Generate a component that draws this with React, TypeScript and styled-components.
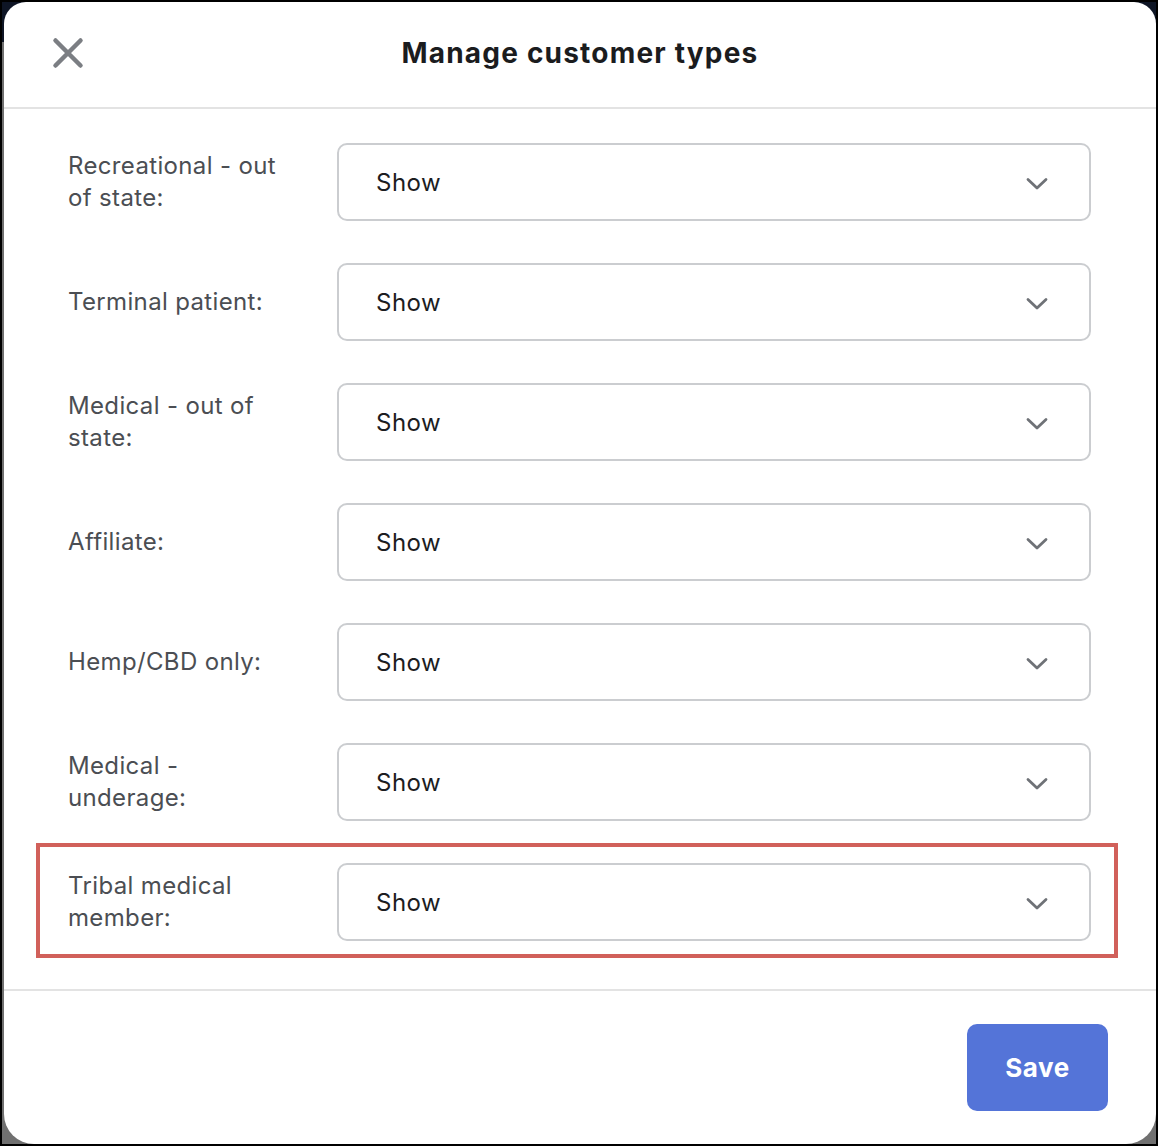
import styled, { createGlobalStyle } from 'styled-components'

/* ── Global ── */
const GlobalStyle = createGlobalStyle`
  html, body {
    margin: 0;
    padding: 0;
  }
  body {
    font-family: Inter, "Noto Sans", sans-serif;
    -webkit-font-smoothing: antialiased;
  }
  * {
    box-sizing: border-box;
  }
`

/* ── Styled ── */
const Backdrop = styled.div`
  width: 1158px;
  height: 1146px;
  border: 2px solid #000;
  background: linear-gradient(#0e1525 0 40px, #707070 40px);
  padding: 0 0 0 2px;
  display: flex;
`

const Modal = styled.div`
  flex: 1;
  background: #fff;
  border-radius: 22px 22px 30px 30px;
  display: flex;
  flex-direction: column;
  overflow: hidden;
`

const Header = styled.header`
  height: 107px;
  flex-shrink: 0;
  border-bottom: 2px solid #e3e3e3;
  display: grid;
  grid-template-columns: 64px 1fr 64px;
  align-items: center;
  padding: 0 48px 0 48px;
`

const CloseButton = styled.button`
  width: 36px;
  height: 36px;
  padding: 0;
  border: none;
  background: none;
  display: flex;
  align-items: center;
  justify-content: center;
  cursor: pointer;
  margin: -4px 0 0 -2px;
`

const Title = styled.h1`
  margin: 0;
  text-align: center;
  font-size: 28px;
  font-weight: 700;
  color: #1b1c1e;
  letter-spacing: 1.2px;
  margin-top: -4px;
`

const Body = styled.div`
  flex: 1;
  padding: 34px 65px 48px 64px;
  display: flex;
  flex-direction: column;
  gap: 42px;
  border-bottom: 2px solid #e3e3e3;
`

const Row = styled.div<{ $highlight?: boolean }>`
  position: relative;
  display: grid;
  grid-template-columns: 222px 1fr;
  column-gap: 47px;
  align-items: center;

  ${({ $highlight }) =>
    $highlight &&
    `
    &::after {
      content: '';
      position: absolute;
      top: -20px;
      bottom: -17px;
      left: -32px;
      right: -27px;
      border: 4px solid #d1605a;
      pointer-events: none;
    }
  `}
`

const Label = styled.label`
  font-size: 24px;
  line-height: 32px;
  letter-spacing: 0.35px;
  color: #4b4e53;
`

const Select = styled.div`
  height: 78px;
  border: 2px solid #cbcdd0;
  border-radius: 10px;
  display: flex;
  align-items: center;
  justify-content: space-between;
  padding: 0 41px 0 37px;
  font-size: 24px;
  letter-spacing: 0.5px;
  color: #1c1d1f;
`

const ChevronWrap = styled.span`
  display: flex;
  margin-top: 4px;
`

const Footer = styled.footer`
  height: 153px;
  flex-shrink: 0;
  display: flex;
  align-items: center;
  justify-content: flex-end;
  padding: 0 48px 0 0;
`

const SaveButton = styled.button`
  width: 141px;
  height: 87px;
  border: none;
  border-radius: 10px;
  background: #5474d8;
  color: #fff;
  font-family: Inter, "Noto Sans", sans-serif;
  font-size: 26px;
  font-weight: 700;
  letter-spacing: 0.5px;
  cursor: pointer;
`

/* ── Icons ── */
const CloseIcon = () => (
  <svg width="32" height="32" viewBox="0 0 32 32" fill="none">
    <path d="M3.5 3.5 L28.5 28.5 M28.5 3.5 L3.5 28.5" stroke="#7b7e83" strokeWidth="4.5" strokeLinecap="round" />
  </svg>
)

const Chevron = () => (
  <svg width="22" height="14" viewBox="0 0 22 14" fill="none">
    <path d="M2 2.5 L11 11 L20 2.5" stroke="#6f7277" strokeWidth="2.8" strokeLinecap="round" strokeLinejoin="round" />
  </svg>
)

/* ── Data ── */
const types = [
  'Recreational - out of state:',
  'Terminal patient:',
  'Medical - out of state:',
  'Affiliate:',
  'Hemp/CBD only:',
  'Medical - underage:',
  'Tribal medical member:',
]

/* ── Component ── */
export default function App() {
  return (
    <>
      <GlobalStyle />
      <Backdrop>
        <Modal>
          <Header>
            <CloseButton aria-label="Close">
              <CloseIcon />
            </CloseButton>
            <Title>Manage customer types</Title>
            <span />
          </Header>

          <Body>
            {types.map((t, i) => (
              <Row key={t} $highlight={i === types.length - 1}>
                <Label>{t}</Label>
                <Select>
                  <span>Show</span>
                  <ChevronWrap>
                    <Chevron />
                  </ChevronWrap>
                </Select>
              </Row>
            ))}
          </Body>

          <Footer>
            <SaveButton>Save</SaveButton>
          </Footer>
        </Modal>
      </Backdrop>
    </>
  )
}
